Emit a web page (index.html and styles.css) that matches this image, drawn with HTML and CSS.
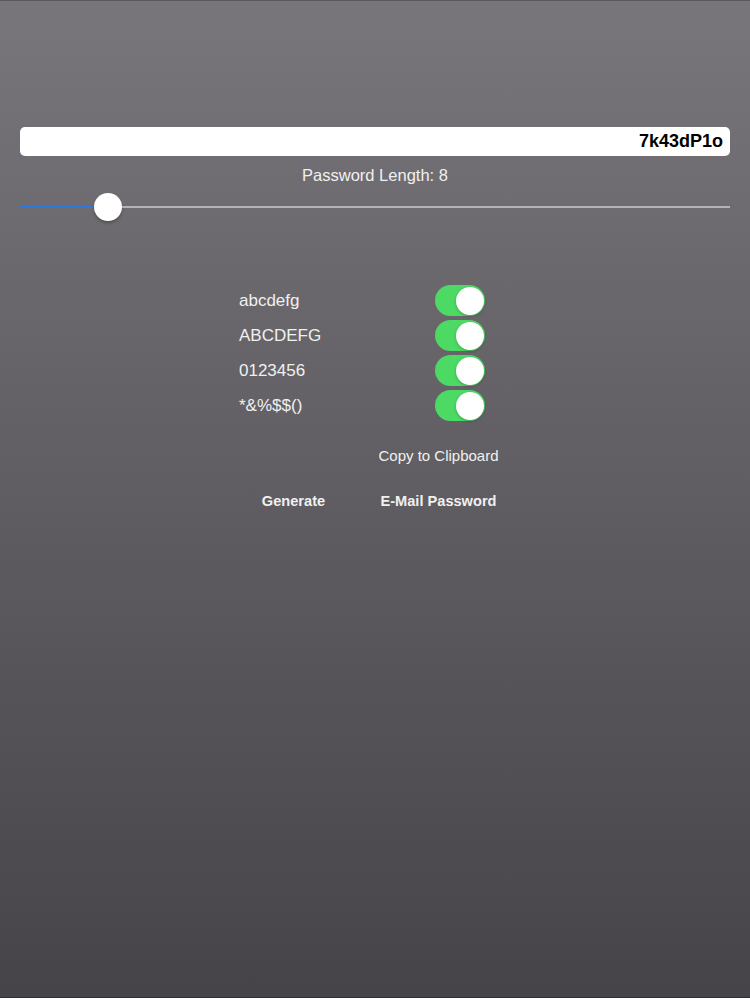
FILE: index.html
```html
<!DOCTYPE html>
<html lang="en">
<head>
    <meta charset="UTF-8">
    <meta name="viewport" content="width=device-width, initial-scale=1.0">
    <title>Password Generator</title>
    <link rel="stylesheet" href="styles.css">
</head>
<body>
    <div class="screen">
        <div class="password-field">7k43dP1o</div>
        <div class="length-label">Password Length: 8</div>

        <div class="slider">
            <div class="track-fill"></div>
            <div class="thumb"></div>
        </div>

        <!-- character sets -->
        <div class="options">
            <div class="option">
                <span>abcdefg</span>
                <div class="switch"><div class="knob"></div></div>
            </div>
            <div class="option">
                <span>ABCDEFG</span>
                <div class="switch"><div class="knob"></div></div>
            </div>
            <div class="option">
                <span>0123456</span>
                <div class="switch"><div class="knob"></div></div>
            </div>
            <div class="option">
                <span>*&amp;%$$()</span>
                <div class="switch"><div class="knob"></div></div>
            </div>
        </div>

        <div class="actions">
            <span></span>
            <a href="#" class="link">Copy to Clipboard</a>
        </div>
        <div class="actions main-actions">
            <a href="#" class="link bold">Generate</a>
            <a href="#" class="link bold">E-Mail Password</a>
        </div>
    </div>
</body>
</html>
```

FILE: styles.css
```css
body {
    margin: 0;
    padding: 0;
    font-family: "Liberation Sans", Arial, sans-serif;
    color: #f0f0f0;
}

.screen {
    height: 998px;
    padding: 126px 20px 0 20px;
    box-sizing: border-box;
    background: linear-gradient(to bottom, #78767a 0%, #5f5d61 50%, #464448 100%);
    border-top: 1px solid #5a595d;
    border-bottom: 1px solid #2e2d30;
}

.password-field {
    height: 29px;
    line-height: 29px;
    background-color: #fff;
    border-radius: 5px;
    text-align: right;
    padding-right: 7px;
    color: #000;
    font-weight: bold;
    font-size: 18px;
}

.length-label {
    margin-top: 9px;
    line-height: 20px;
    text-align: center;
    font-size: 16.5px;
}

.slider {
    margin-top: 7px;
    height: 30px;
    display: flex;
    align-items: center;
    background: linear-gradient(#b4b4b6, #b4b4b6) no-repeat center / 100% 2px;
}

.track-fill {
    width: 88px;
    height: 2px;
    background-color: #2a7ae2;
}

.thumb {
    width: 28px;
    height: 28px;
    margin-left: -14px;
    border-radius: 50%;
    background-color: #fff;
    box-shadow: 0 2px 3px rgba(0, 0, 0, 0.25);
}

.options {
    margin-top: 61px;
    margin-left: 219px;
    width: 246px;
}

.option {
    height: 35px;
    display: flex;
    justify-content: space-between;
    align-items: center;
    font-size: 17px;
}

.switch {
    width: 50px;
    height: 31px;
    border-radius: 16px;
    background-color: #4cd964;
    display: flex;
    align-items: center;
    justify-content: flex-end;
    padding-right: 1.5px;
    box-sizing: border-box;
}

.knob {
    width: 28px;
    height: 28px;
    border-radius: 50%;
    background-color: #fff;
    box-shadow: 0 1px 3px rgba(0, 0, 0, 0.25);
}

.actions {
    margin-top: 23px;
    margin-left: 201px;
    display: grid;
    grid-template-columns: 145px 145px;
    line-height: 20px;
}

.main-actions {
    margin-top: 25px;
}

.link {
    text-align: center;
    color: #f0f0f0;
    text-decoration: none;
    font-size: 15px;
}

.bold {
    font-weight: bold;
    font-size: 14.6px;
}
```
